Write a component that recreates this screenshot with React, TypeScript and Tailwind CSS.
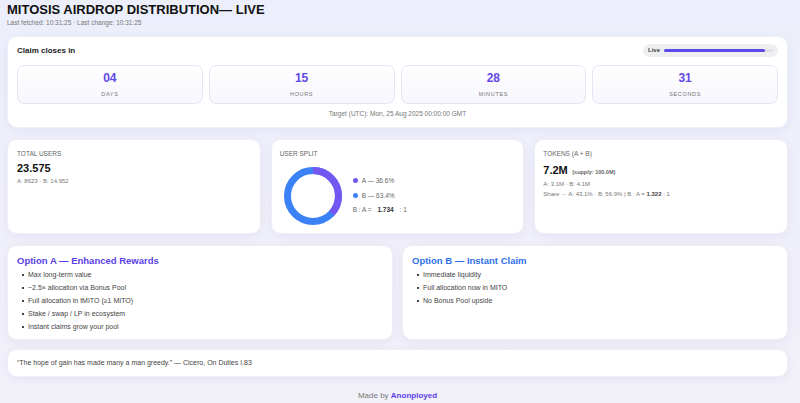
import React from "react";

const units = [
  { value: "04", label: "DAYS" },
  { value: "15", label: "HOURS" },
  { value: "28", label: "MINUTES" },
  { value: "31", label: "SECONDS" },
];

const optionA = [
  "Max long-term value",
  "~2.5× allocation via Bonus Pool",
  "Full allocation in tMITO (≥1 MITO)",
  "Stake / swap / LP in ecosystem",
  "Instant claims grow your pool",
];

const optionB = ["Immediate liquidity", "Full allocation now in MITO", "No Bonus Pool upside"];

function Card({ className = "", children }: { className?: string; children: React.ReactNode }) {
  return (
    <div
      className={`bg-white rounded-[10px] shadow-[0_2px_8px_rgba(90,80,160,0.08)] border border-[#f0eff8] ${className}`}
    >
      {children}
    </div>
  );
}

function Donut() {
  // A = 36.6%, B = 63.4%
  const r = 25.5;
  const c = 2 * Math.PI * r;
  const a = c * 0.366;
  return (
    <svg width="60" height="60" viewBox="0 0 60 60">
      <circle cx="30" cy="30" r={r} fill="none" stroke="#3b82f6" strokeWidth="7" />
      <circle
        cx="30"
        cy="30"
        r={r}
        fill="none"
        stroke="#7357f0"
        strokeWidth="7"
        strokeDasharray={`${a} ${c - a}`}
        transform="rotate(-90 30 30)"
      />
    </svg>
  );
}

export default function App() {
  return (
    <div
      className="min-h-[403px] w-full bg-gradient-to-b from-[#eceffb] to-[#f2f0f9] pl-[7px] pr-[12px] text-[#222]"
      style={{ fontFamily: '"Liberation Sans", Arial, sans-serif' }}
    >
      {/* header */}
      <div className="pt-[2px]">
        <h1 className="text-[13px] font-bold leading-[15px] text-[#111]">MITOSIS AIRDROP DISTRIBUTION— LIVE</h1>
        <p className="text-[6.5px] leading-[9px] text-[#777] mt-[1px]">Last fetched: 10:31:25 · Last change: 10:31:25</p>
      </div>

      {/* countdown */}
      <Card className="mt-[9px] px-[9px] pt-[7px] pb-[8px]">
        <div className="flex items-center justify-between">
          <span className="text-[8px] font-bold text-[#222] pt-[1px]">Claim closes in</span>
          <div className="flex items-center gap-[4px] bg-[#efeff2] rounded-full w-[135px] h-[13px] px-[5px]">
            <span className="text-[6px] font-bold text-[#444]">Live</span>
            <div className="flex-1 h-[3px] rounded-full bg-[#e0e0e6]">
              <div className="h-full w-[93%] rounded-full bg-[#5b4ae8]" />
            </div>
          </div>
        </div>
        <div className="grid grid-cols-4 gap-[6px] mt-[8px]">
          {units.map((u) => (
            <div
              key={u.label}
              className="h-[39px] rounded-[7px] border border-[#e6e5f5] bg-gradient-to-b from-white to-[#f6f6fd] flex flex-col items-center justify-center"
            >
              <span className="text-[12px] font-bold leading-[14px] text-[#6249e6]">{u.value}</span>
              <span className="text-[5.5px] tracking-[0.12em] text-[#777] mt-[5px]">{u.label}</span>
            </div>
          ))}
        </div>
        <p className="text-center text-[6.5px] text-[#777] mt-[5px]">Target (UTC): Mon, 25 Aug 2025 00:00:00 GMT</p>
      </Card>

      {/* stats */}
      <div className="grid grid-cols-3 gap-[10px] mt-[11px]">
        <Card className="h-[95px] px-[9px] pt-[9px]">
          <p className="text-[6.5px] text-[#666]">TOTAL USERS</p>
          <p className="text-[11px] font-bold text-[#111] mt-[3px] leading-[13px]">23.575</p>
          <p className="text-[6px] text-[#777] mt-[2px]">A: 8623 · B: 14.952</p>
        </Card>
        <Card className="h-[95px] px-[8px] pt-[9px]">
          <p className="text-[6.5px] text-[#666]">USER SPLIT</p>
          <div className="flex items-center gap-[10px] mt-[7px] pl-[3px]">
            <Donut />
            <div className="flex flex-col gap-[5px] text-[6.5px] text-[#666]">
              <div className="flex items-center gap-[4px]">
                <span className="w-[5px] h-[5px] rounded-full bg-[#7357f0]" />
                <span>A — 36.6%</span>
              </div>
              <div className="flex items-center gap-[4px]">
                <span className="w-[5px] h-[5px] rounded-full bg-[#3b82f6]" />
                <span>B — 63.4%</span>
              </div>
              <div>
                B : A = <span className="font-bold text-[#333] px-[4px]">1.734</span> : 1
              </div>
            </div>
          </div>
        </Card>
        <Card className="h-[95px] px-[8px] pt-[9px]">
          <p className="text-[6.5px] text-[#666]">TOKENS (A + B)</p>
          <p className="mt-[3px] leading-[13px]">
            <span className="text-[11px] font-bold text-[#111]">7.2M</span>{" "}
            <span className="text-[5.5px] font-bold text-[#666]">(supply: 100.0M)</span>
          </p>
          <p className="text-[6px] text-[#777] mt-[1px]">A: 3.1M · B: 4.1M</p>
          <p className="text-[6px] text-[#777] mt-[1px]">
            Share → A: 43.1% · B: 56.9% | B : A = <span className="font-bold text-[#444]">1.322</span> : 1
          </p>
        </Card>
      </div>

      {/* options */}
      <div className="grid grid-cols-2 gap-[9px] mt-[11px]">
        <Card className="h-[95px] px-[9px] pt-[9px]">
          <h2 className="text-[9.5px] font-bold text-[#5b3fe6] leading-[12px]">Option A — Enhanced Rewards</h2>
          <ul className="mt-[2px]">
            {optionA.map((t) => (
              <li key={t} className="flex items-center gap-[4px] text-[7px] text-[#444] h-[13px]">
                <span className="w-[2px] h-[2px] bg-[#444] ml-[5px]" />
                {t}
              </li>
            ))}
          </ul>
        </Card>
        <Card className="h-[95px] px-[9px] pt-[9px]">
          <h2 className="text-[9.5px] font-bold text-[#2f6fe8] leading-[12px]">Option B — Instant Claim</h2>
          <ul className="mt-[2px]">
            {optionB.map((t) => (
              <li key={t} className="flex items-center gap-[4px] text-[7px] text-[#444] h-[13px]">
                <span className="w-[2px] h-[2px] bg-[#444] ml-[5px]" />
                {t}
              </li>
            ))}
          </ul>
        </Card>
      </div>

      {/* quote */}
      <Card className="mt-[9px] h-[28px] px-[9px] flex items-center">
        <p className="text-[7px] text-[#444]">
          “The hope of gain has made many a man greedy.” — Cicero, On Duties I.83
        </p>
      </Card>

      {/* footer */}
      <p className="text-center text-[8px] text-[#777] mt-[13px]">
        Made by <span className="font-bold text-[#5b3fe6]">Anonployed</span>
      </p>
    </div>
  );
}
